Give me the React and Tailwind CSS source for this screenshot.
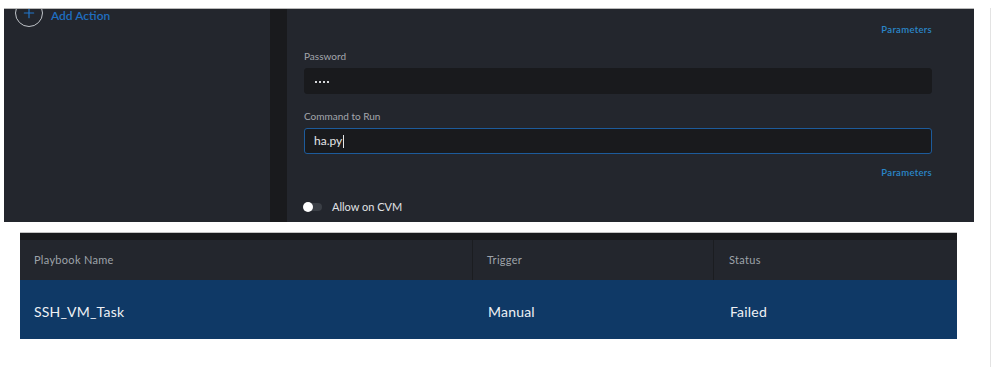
import { Plus } from "lucide-react";

function Field({ label, children, focused }) {
  return (
    <div className="flex flex-col">
      <span className="text-[10px] text-[#a3a7ad] leading-[12px]">{label}</span>
      <div
        className={
          "mt-[6px] h-[26px] rounded-[3px] bg-[#191a1d] flex items-center px-[9px] " +
          (focused ? "border border-[#1d5b9b]" : "border border-[#191a1d]")
        }
      >
        {children}
      </div>
    </div>
  );
}

export default function App() {
  return (
    <div
      className="relative w-[996px] h-[367px] bg-white overflow-hidden"
      style={{ fontFamily: "Lato, 'Open Sans', sans-serif" }}
    >
      <div className="absolute right-[5px] top-[8px] bottom-0 w-px bg-[#e3e3e3]"></div>

      {/* action editor panel */}
      <div className="ml-[4px] mt-[8px] w-[970px] h-[214px] flex overflow-hidden bg-[#23262d] border-t border-[#b9b9b9]">
        <div className="w-[266px] flex items-start">
          <div className="-mt-[10px] ml-[11px] w-[28px] h-[28px] rounded-full border-[1.5px] border-[#bfc3c8] flex items-center justify-center shrink-0">
            <Plus size={16} strokeWidth={1.75} className="text-[#2277cc]" />
          </div>
          <span className="ml-[8px] -mt-[2px] text-[12px] text-[#1f6ec0] font-semibold">Add Action</span>
        </div>
        <div className="w-[17px] bg-[#191a1d]"></div>
        <div className="flex-1 pl-[17px] pr-[42px] flex flex-col">
          <div className="mt-[14px] flex justify-end">
            <span className="text-[9.5px] font-semibold text-[#2a86c9] tracking-[0.3px]">Parameters</span>
          </div>
          <div className="mt-[13px]">
            <Field label="Password">
              <div className="flex gap-[2px] mt-[2px] ml-px">
                <span className="w-[2px] h-[2px] bg-[#d4d6d9]"></span>
                <span className="w-[2px] h-[2px] bg-[#d4d6d9]"></span>
                <span className="w-[2px] h-[2px] bg-[#d4d6d9]"></span>
                <span className="w-[2px] h-[2px] bg-[#d4d6d9]"></span>
              </div>
            </Field>
          </div>
          <div className="mt-[16px]">
            <Field label="Command to Run" focused>
              <span className="text-[12px] text-[#e4e6e8] leading-none">ha.py</span>
              <span className="w-px h-[13px] bg-[#e4e6e8] ml-px"></span>
            </Field>
          </div>
          <div className="mt-[12px] flex justify-end">
            <span className="text-[9.5px] font-semibold text-[#2a86c9] tracking-[0.3px]">Parameters</span>
          </div>
          <div className="mt-[18px] flex items-center">
            <div className="w-[18px] h-[8px] rounded-full bg-[#3a3e45] relative">
              <div className="absolute -left-px -top-px w-[10px] h-[10px] rounded-full bg-white"></div>
            </div>
            <span className="ml-[10px] text-[11px] text-[#e0e2e5]">Allow on CVM</span>
          </div>
        </div>
      </div>

      {/* playbook table */}
      <div className="ml-[20px] mt-[10px] w-[937px] border-t border-[#c4c4c4]">
        <div className="h-[7px] bg-[#1a1b1e]"></div>
        <div className="h-[40px] bg-[#23262d] grid grid-cols-[453px_241px_1fr] text-[11px] tracking-[0.3px] text-[#9ea3aa]">
          <div className="flex items-center pl-[14px] border-r border-[#1b1d21]">Playbook Name</div>
          <div className="flex items-center pl-[14px] border-r border-[#1b1d21]">Trigger</div>
          <div className="flex items-center pl-[15px]">Status</div>
        </div>
        <div className="h-[59px] bg-[#0f3966] grid grid-cols-[453px_241px_1fr] text-[14px] tracking-[0.2px] text-[#eef1f5]">
          <div className="flex items-center pl-[14px] pt-[4px]">SSH_VM_Task</div>
          <div className="flex items-center pl-[15px] pt-[4px]">Manual</div>
          <div className="flex items-center pl-[16px] pt-[4px]">Failed</div>
        </div>
      </div>
    </div>
  );
}
